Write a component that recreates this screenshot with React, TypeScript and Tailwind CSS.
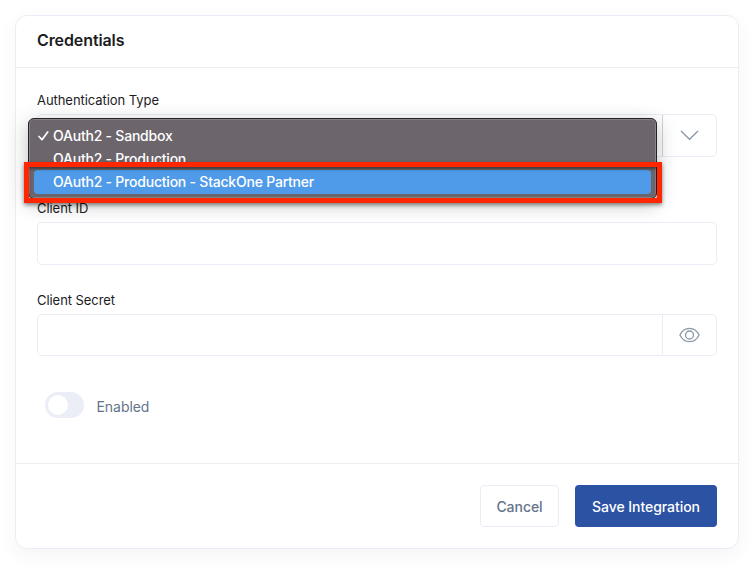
import React from "react";

const options = ["OAuth2 - Sandbox", "OAuth2 - Production", "OAuth2 - Production - StackOne Partner"];

function Label({ children }: { children: React.ReactNode }) {
  return <label className="block h-5 text-[13px] leading-5 tracking-[-0.06px] text-[#1b1c1e]">{children}</label>;
}

function OptionMenu() {
  return (
    <div className="absolute -left-[10px] top-[3px] z-10 h-[81px] w-[629px] rounded-[6px] border border-[#242226] bg-[#6c666c] pt-[5px] text-[14px] font-[450] tracking-[-0.22px] text-white shadow-[inset_0_0_0_1px_#898489,0_5px_20px_rgba(0,0,0,0.25)]">
      <div className="relative flex h-[23px] items-center pl-6">
        <svg className="absolute left-[9px] top-[7px]" width="11" height="10" viewBox="0 0 11 10" fill="none" stroke="white" strokeWidth="1.7" strokeLinecap="round" strokeLinejoin="round">
          <path d="M1 5.5 4 8.7 9.7 1" />
        </svg>
        {options[0]}
      </div>
      <div className="flex h-[23px] items-center pl-6">{options[1]}</div>
      <div className="mx-[5px] flex h-6 items-center rounded-[4px] bg-[#4f9be9] pb-px pl-[19px]">{options[2]}</div>
      <div className="absolute -left-[5px] top-[43px] h-[41px] w-[638px] border-[5px] border-[#ff2600] shadow-[0_2px_4px_rgba(0,0,0,0.45),inset_0_2px_3px_rgba(0,0,0,0.45)]" />
    </div>
  );
}

export default function App() {
  return (
    <main className="h-[568px] w-[752px] overflow-hidden bg-white p-[15px] pr-[13px] font-['Inter',sans-serif]">
      <section className="flex h-[534px] flex-col rounded-[12px] border border-[#ebedf6] bg-white shadow-[0_6px_20px_rgba(40,60,60,0.05)]">
        <header className="flex h-[52px] items-center border-b border-[#ebedf3] px-[21px] pb-[3px]">
          <h1 className="text-[16px] font-semibold leading-6 tracking-[-0.1px] text-[#1b1c1e]">Credentials</h1>
        </header>
        <div className="h-[395px] px-[21px] pt-[22px]">
          <Label>Authentication Type</Label>
          <div className="relative mt-1 flex h-[43px] rounded-[5px] border border-[#ebedf6]">
            <div className="w-[625px] border-r border-[#d0d4dc]" />
            <div className="flex flex-1 items-center justify-center">
              <svg width="19" height="11" viewBox="0 0 19 11" fill="none" stroke="#8997a5" strokeWidth="1.3">
                <path d="m1 1 8.5 8.3L18 1" />
              </svg>
            </div>
            <OptionMenu />
          </div>
          <div className="mt-[41px]"><Label>Client ID</Label></div>
          <div className="mt-1 h-[43px] rounded-[5px] border border-[#ebedf6]" />
          <div className="mt-[25px]"><Label>Client Secret</Label></div>
          <div className="mt-1 flex h-[42px] rounded-[5px] border border-[#ebedf6]">
            <div className="w-[625px] border-r border-[#ebedf6]" />
            <div className="flex flex-1 items-center justify-center">
              <svg width="21" height="16" viewBox="0 0 21 16" fill="none" stroke="#8997a5" strokeWidth="1.3">
                <path d="M.9 8C5.3-.9 15.7-.9 20.1 8 15.7 16.9 5.3 16.9.9 8Z" />
                <circle cx="10.5" cy="8" r="4" />
              </svg>
            </div>
          </div>
          <div className="ml-2 mt-9 flex h-[26px]">
            <div className="h-[26px] w-[39px] rounded-full bg-[#ebeef7] p-[3px]">
              <div className="size-5 rounded-full bg-white" />
            </div>
            <span className="ml-[12.5px] mt-[5px] text-[14px] leading-5 tracking-[-0.05px] text-[#64748b]">Enabled</span>
          </div>
        </div>
        <footer className="flex flex-1 items-start justify-end gap-4 border-t border-[#ebedf3] px-[21px] pt-[21px] text-[14px] font-medium tracking-[-0.05px]">
          <button className="h-[42px] w-[79px] rounded-[4px] border border-[#ebedf6] text-[#64748b]">Cancel</button>
          <button className="h-[42px] w-[142px] rounded-[4px] bg-[#2c52a3] text-white">Save Integration</button>
        </footer>
      </section>
    </main>
  );
}
